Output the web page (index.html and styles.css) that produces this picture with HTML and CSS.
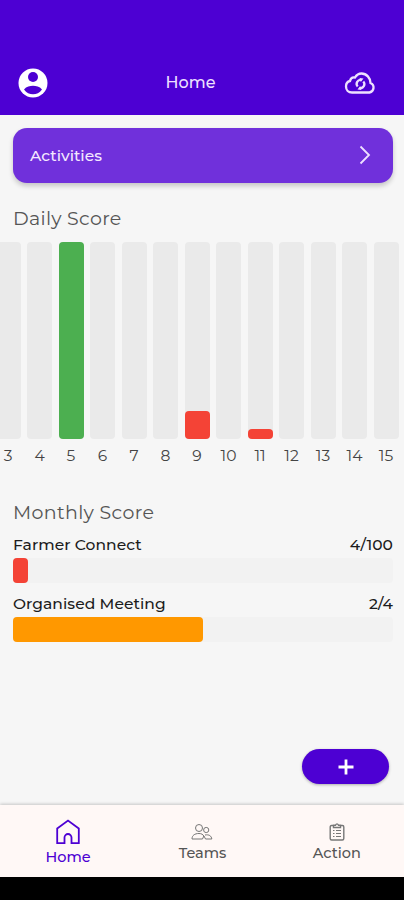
FILE: index.html
```html
<!DOCTYPE html>
<html lang="en">
<head>
  <meta charset="utf-8" />
  <meta name="viewport" content="width=device-width" />
  <title>Home</title>
  <link rel="stylesheet" href="styles.css">
</head>

<body>
  <header class="header">
    <svg class="profile-icon" viewBox="0 0 30 30">
      <circle cx="15" cy="15" r="14.5" fill="#fff" />
      <circle cx="15" cy="9" r="5" fill="#4d00d3" />
      <path d="M6 21.500C8.500 18.500 12 17.800 15 17.800S21.500 18.500 24 21.500C21.500 25 18.500 26.200 15 26.200S8.500 25 6 21.500Z" fill="#4d00d3" />
    </svg>
    <h1 class="header-title">Home</h1>
    <svg class="sync-icon" viewBox="0 0 32 24">
      <path d="M8 21.500H25.500A5 5 0 0 0 26.500 12C26.500 7 22.500 2.500 17.500 2.500C14.500 2.500 12.500 4 11 6.500C8.500 6 6.500 7.500 6 10C3.500 10.500 2 13 2 15.500C2 19 4.500 21.500 8 21.500Z" />
      <path d="M13.700 15.600A4 4 0 0 1 17.500 9M19.300 10.400A4 4 0 0 1 15.500 17" />
      <path class="arrows" d="M15.500 7L19.500 7.500L16.800 11ZM17.500 19L13.500 18.500L16.200 15Z" />
    </svg>
  </header>

  <main class="content">
    <a class="activities">
      <span class="activities-label">Activities</span>
      <svg class="chevron" viewBox="0 0 12 20"><path d="M1.500 1.500L10 10L1.500 18.500" /></svg>
    </a>

    <h2 class="title daily-title">Daily Score</h2>
    <div class="chart">
      <div class="day"><div class="track"></div><span>3</span></div>
      <div class="day"><div class="track"></div><span>4</span></div>
      <div class="day"><div class="track"><div class="fill green" style="height: 100%"></div></div><span>5</span></div>
      <div class="day"><div class="track"></div><span>6</span></div>
      <div class="day"><div class="track"></div><span>7</span></div>
      <div class="day"><div class="track"></div><span>8</span></div>
      <div class="day"><div class="track"><div class="fill red" style="height: 14.3%"></div></div><span>9</span></div>
      <div class="day"><div class="track"></div><span>10</span></div>
      <div class="day"><div class="track"><div class="fill red" style="height: 5.2%"></div></div><span>11</span></div>
      <div class="day"><div class="track"></div><span>12</span></div>
      <div class="day"><div class="track"></div><span>13</span></div>
      <div class="day"><div class="track"></div><span>14</span></div>
      <div class="day"><div class="track"></div><span>15</span></div>
    </div>

    <h2 class="title monthly-title">Monthly Score</h2>
    <div class="score">
      <div class="score-row"><span>Farmer Connect</span><span>4/100</span></div>
      <div class="score-track"><div class="score-fill red" style="width: 4%"></div></div>
    </div>
    <div class="score">
      <div class="score-row"><span>Organised Meeting</span><span>2/4</span></div>
      <div class="score-track"><div class="score-fill orange" style="width: 50%"></div></div>
    </div>

    <button class="add" type="button" aria-label="Add">
      <svg viewBox="0 0 16 16"><path d="M8 0.500V15.500M0.500 8H15.500" /></svg>
    </button>
  </main>

  <nav class="tabs">
    <a class="tab active">
      <svg class="home-icon" viewBox="0 0 24 26">
        <path d="M1.200 9.500L12 1.500L22.800 9.500V24.200H15.500V18.500A3.500 3.500 0 0 0 8.500 18.500V24.200H1.200Z" />
      </svg>
      <span>Home</span>
    </a>
    <a class="tab">
      <svg class="teams-icon" viewBox="0 0 22 18">
        <circle cx="8" cy="5" r="3.500" />
        <circle cx="15.200" cy="7" r="2.600" />
        <path d="M1 16C1 12.500 3.500 10.500 8 10.500C10.500 10.500 12 11.500 12.800 13L11.500 16ZM14 12C18 11.200 20.500 13 20.800 16H14.500L13 13" />
      </svg>
      <span>Teams</span>
    </a>
    <a class="tab">
      <svg class="action-icon" viewBox="0 0 16 18">
        <path d="M4.500 2.500H2.500Q1.200 2.500 1.200 4V15.500Q1.200 17 2.700 17H13.300Q14.800 17 14.800 15.500V4Q14.800 2.500 13.500 2.500H11.500M4.500 4.500V2.200H6.500Q8 -0.500 9.500 2.200H11.500V4.500Z" />
        <path class="thin" d="M4 7.500H5.500M7 7.500H12M4 10.500H5.500M7 10.500H12M4 13.500H5.500M7 13.500H12" />
      </svg>
      <span>Action</span>
    </a>
  </nav>
</body>
</html>
```
FILE: styles.css
```css
* {
  box-sizing: border-box;
}

body {
  display: flex;
  flex-direction: column;
  height: 900px;
  margin: 0;
  padding-bottom: 23px;
  overflow: hidden;
  background-color: #000;
  color: #222;
  font-family: Montserrat, Inter, sans-serif;
}

svg {
  display: block;
  fill: none;
}

.header {
  display: grid;
  grid-template-columns: 32px 1fr 32px;
  align-items: center;
  flex: none;
  height: 115px;
  padding: 50px 28px 0 18px;
  background-color: #4d00d3;
}

.profile-icon {
  width: 30px;
  height: 30px;
}

.header-title {
  margin: 0;
  padding-right: 13px;
  color: #eee0ff;
  font-size: 16px;
  font-weight: 500;
  text-align: center;
}

.sync-icon {
  width: 32px;
  height: 24px;
  stroke: #eee0ff;
  stroke-width: 2.3;
}

.arrows {
  fill: #eee0ff;
  stroke: none;
}

.content {
  display: flex;
  flex-direction: column;
  flex: 1;
  padding: 13px 11px 0 13px;
  background-color: #f6f6f6;
}

.activities {
  display: flex;
  align-items: center;
  justify-content: space-between;
  height: 55px;
  padding: 0 22px 1px 17px;
  border-radius: 14px;
  background-color: #7030db;
  box-shadow: 0 3px 5px rgba(0, 0, 0, 0.2);
  color: #f4e9ff;
  font-size: 15.500px;
  font-weight: 500;
}

.chevron {
  width: 12px;
  height: 20px;
  stroke: #eee0ff;
  stroke-width: 1.8;
}

.title {
  margin: 0;
  color: #555;
  font-size: 19px;
  font-weight: 400;
  line-height: 24px;
}

.daily-title {
  margin-top: 24px;
  letter-spacing: 0.3px;
}

.chart {
  display: grid;
  grid-template-columns: repeat(13, 25px);
  gap: 6.5px;
  margin-top: 11px;
  margin-left: -17.5px;
}

.day {
  color: #444;
  font-size: 15.500px;
  line-height: 20px;
  text-align: center;
}

.track {
  display: flex;
  align-items: flex-end;
  height: 197px;
  margin-bottom: 7px;
  border-radius: 4px;
  background-color: #eaeaea;
}

.fill {
  width: 100%;
  border-radius: 4px;
}

.green {
  background-color: #4caf50;
}

.red {
  background-color: #f44336;
}

.orange {
  background-color: #ff9800;
}

.monthly-title {
  margin-top: 35px;
  margin-bottom: 10px;
  letter-spacing: 0.35px;
}

.score {
  height: 59px;
}

.score-row {
  display: flex;
  justify-content: space-between;
  color: #1c1c1c;
  font-size: 15.500px;
  font-weight: 500;
  letter-spacing: 0.05px;
  line-height: 20px;
}

.score-track {
  height: 25px;
  margin-top: 3px;
  border-radius: 4px;
  background-color: #f2f2f2;
}

.score-fill {
  height: 100%;
  border-radius: 4px;
}

.add {
  display: flex;
  align-items: center;
  justify-content: center;
  align-self: flex-end;
  width: 87px;
  height: 35px;
  margin-top: auto;
  margin-right: 4px;
  margin-bottom: 21px;
  border: none;
  border-radius: 18px;
  background-color: #4d00d3;
  box-shadow: 0 1px 3px rgba(0, 0, 0, 0.3);
}

.add svg {
  width: 16px;
  height: 16px;
  stroke: #fff;
  stroke-width: 2.8;
}

.tabs {
  display: grid;
  grid-template-columns: repeat(3, 1fr);
  flex: none;
  z-index: 1;
  height: 72px;
  padding-left: 1px;
  background-color: #fff8f6;
  box-shadow: 0 -1px 3px rgba(0, 0, 0, 0.2);
}

.tab {
  display: flex;
  flex-direction: column;
  align-items: center;
  padding-top: 18px;
  color: #555;
  font-size: 14.500px;
  font-weight: 500;
  line-height: 20px;
  stroke: #777;
}

.tab span {
  stroke: none;
}

.active {
  padding-top: 14px;
  color: #4d00d3;
  stroke: #4d00d3;
}

.home-icon {
  width: 24px;
  height: 26px;
  margin-bottom: 2px;
  stroke-width: 1.8;
}

.teams-icon {
  width: 22px;
  height: 18px;
  margin-bottom: 2px;
}

.action-icon {
  width: 16px;
  height: 18px;
  margin-bottom: 2px;
  stroke-width: 1.4;
}

.thin {
  stroke-width: 1;
}
```
